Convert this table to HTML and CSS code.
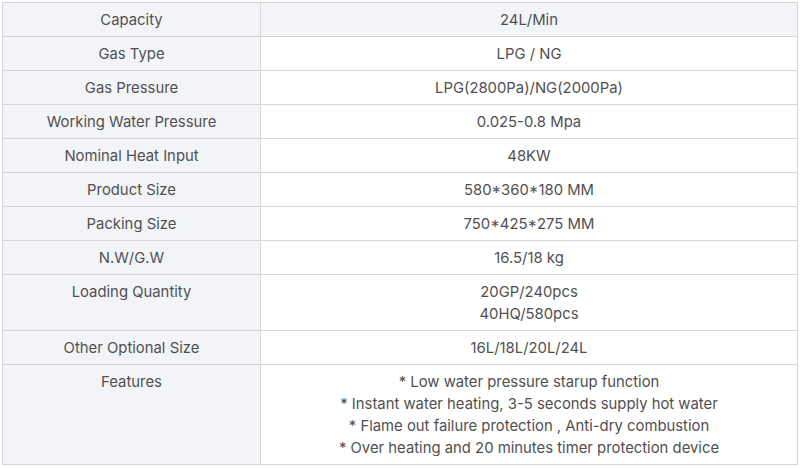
FILE: index.html
```html
<!DOCTYPE html>
<html>
<head>
<meta charset="utf-8">
<link rel="stylesheet" href="styles.css">
</head>
<body>
<table class="spec">
  <tbody>
    <tr class="head"><th>Capacity</th><td>24L/Min</td></tr>
    <tr><th>Gas Type</th><td>LPG / NG</td></tr>
    <tr><th>Gas Pressure</th><td>LPG(2800Pa)/NG(2000Pa)</td></tr>
    <tr><th>Working Water Pressure</th><td>0.025-0.8 Mpa</td></tr>
    <tr><th>Nominal Heat Input</th><td>48KW</td></tr>
    <tr><th>Product Size</th><td>580*360*180 MM</td></tr>
    <tr><th>Packing Size</th><td>750*425*275 MM</td></tr>
    <tr><th>N.W/G.W</th><td>16.5/18 kg</td></tr>
    <tr><th>Loading Quantity</th><td>20GP/240pcs<br>40HQ/580pcs</td></tr>
    <tr><th>Other Optional Size</th><td>16L/18L/20L/24L</td></tr>
    <tr><th>Features</th><td>* Low water pressure starup function<br>* Instant water heating, 3-5 seconds supply hot water<br>* Flame out failure protection , Anti-dry combustion<br>* Over heating and 20 minutes timer protection device</td></tr>
  </tbody>
</table>
</body>
</html>
```

FILE: styles.css
```css
html, body {
  margin: 0;
  padding: 0;
  background: #ffffff;
}
body {
  padding: 2px 2px 0 2px;
  font-family: Inter, "Noto Sans", sans-serif;
  font-size: 14.85px;
  color: #505050;
}
.spec {
  width: 796px;
  border-collapse: collapse;
  table-layout: fixed;
}
.spec th,
.spec td {
  border: 1px solid #d6d6d6;
  padding: 6px 6px 5px;
  line-height: 22px;
  text-align: center;
  vertical-align: top;
  font-weight: normal;
}
.spec th {
  width: 245px;
  background: #f3f4f8;
}
.spec td {
  background: #ffffff;
}
.spec .head td {
  background: #f3f4f8;
}
```
